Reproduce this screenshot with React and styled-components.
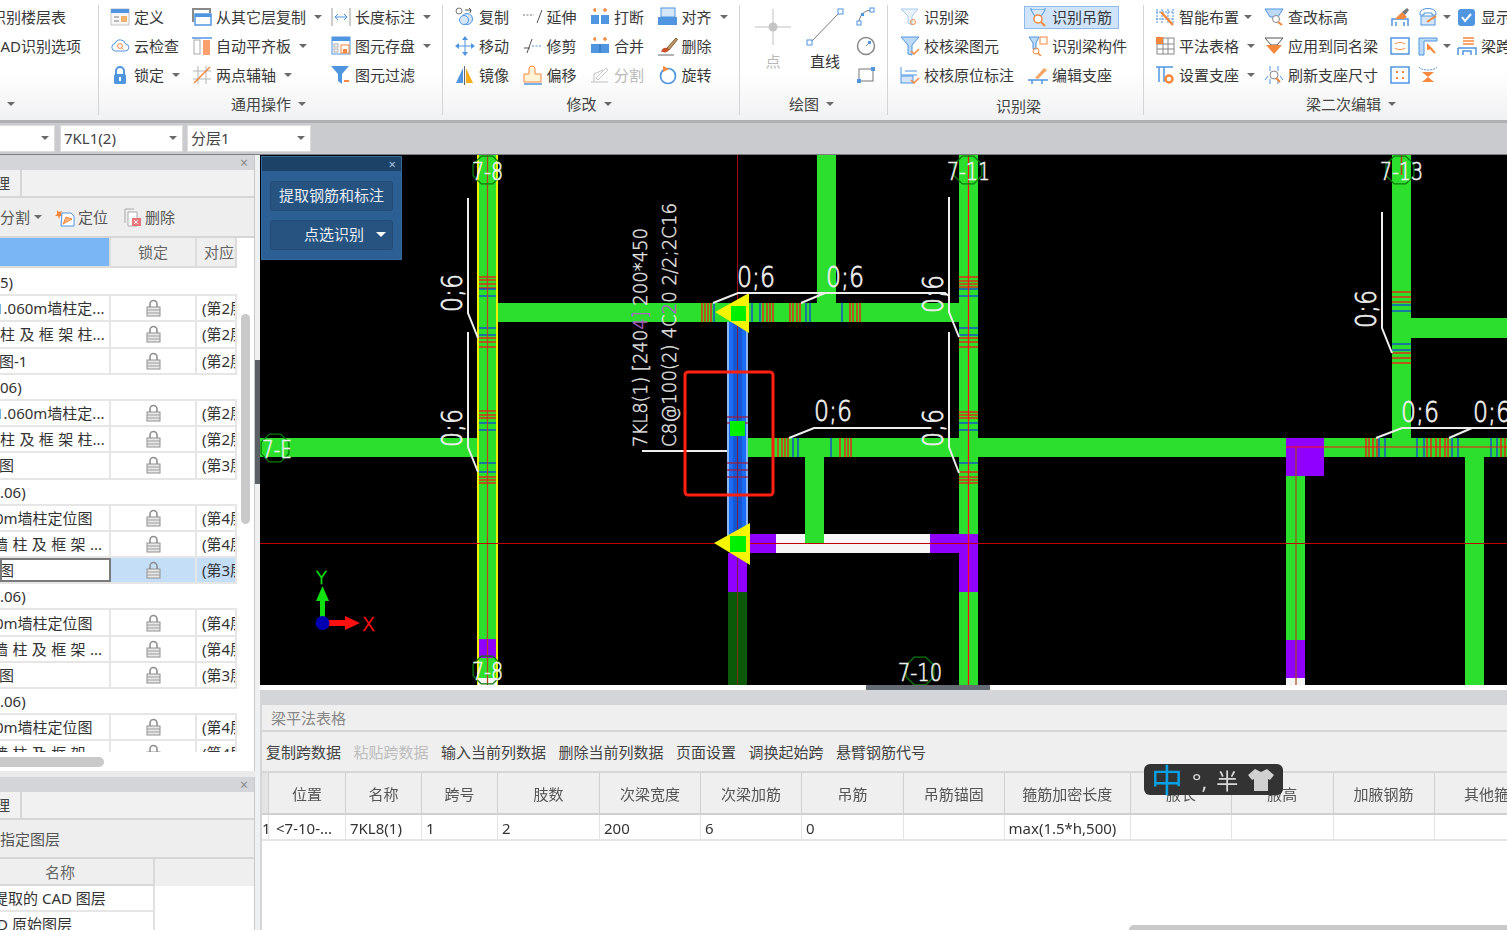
import React from "react";
import styled, { createGlobalStyle } from "styled-components";

const Global = createGlobalStyle`
  html, body { margin: 0; padding: 0; background: #fff; overflow: hidden; }
  body { font-family: "Noto Sans", "Noto Sans CJK SC", sans-serif; font-size: 15px; color: #333; }
`;

const B = "#4f95e0", O = "#f5883c", L = "#d5e6f8";

const Page = styled.div`
  width: 1507px;
  height: 930px;
  overflow: hidden;
  display: flex;
  flex-direction: column;
  filter: blur(0.35px);
  span, div { line-height: 20px; }
`;

/* ---------- ribbon ---------- */
const Ribbon = styled.div`
  height: 120px;
  display: flex;
  background: linear-gradient(#ffffff 60%, #f0f1f2);
  flex: none;
`;
const Group = styled.div`
  width: ${p => p.$w}px;
  margin-left: ${p => p.$ml || 0}px;
  flex: none;
  display: flex;
  flex-direction: column;
`;
const Sep = styled.div`
  width: 1px;
  flex: none;
  margin: 5px 0 5px;
  background: #d2d4d6;
`;
const Cols = styled.div`
  display: flex;
  height: 90px;
  padding: 2px 0 0 ${p => p.$pad || 0}px;
  box-sizing: border-box;
`;
const Col = styled.div`
  width: ${p => p.$w}px;
  flex: none;
`;
const Item = styled.div`
  display: flex;
  align-items: center;
  height: ${p => (p.$active ? 23 : 29)}px;
  gap: 4px;
  white-space: nowrap;
  color: ${p => (p.$off ? "#b8b8b8" : "#383838")};
  ${p => p.$active && `
    margin: 4px 0 2px -4px;
    width: 95px;
    box-sizing: border-box;
    padding: 0 0 2px 3px;
    background: #cfe4fb;
    border: 1px solid #8fbbea;
  `}
`;
const BigItem = styled.div`
  display: flex;
  flex-direction: column;
  align-items: center;
  width: 38px;
  padding-top: 6px;
  color: ${p => (p.$off ? "#b8b8b8" : "#333")};
  span { margin-top: 5px; white-space: nowrap; }
`;
const Caret = styled.i`
  display: inline-block;
  width: 0;
  height: 0;
  margin-left: ${p => p.$ml ?? 4}px;
  border-left: 4px solid transparent;
  border-right: 4px solid transparent;
  border-top: 4px solid #6a6a6a;
`;
const GroupLabel = styled.div`
  height: 28px;
  display: flex;
  align-items: center;
  justify-content: center;
  gap: 3px;
  color: #444;
  padding-top: ${p => (p.$low ? 4 : 0)}px;
  padding-left: ${p => p.$pl || 0}px;
  padding-right: ${p => p.$pr ?? 4}px;
  box-sizing: border-box;
`;

const Svg = ({ size = 20, h, children }) => (
  <svg width={size} height={h || size} viewBox={`0 0 ${size} ${h || size}`} style={{ flex: "none" }} fill="none">{children}</svg>
);

const icons = {
  define: <><rect x="1" y="2" width="18" height="16" fill="#f6f6f6" stroke="#c4c4c4" /><rect x="1" y="2" width="18" height="4" fill={B} /><rect x="4" y="9" width="5" height="2" fill="#bbb" /><rect x="4" y="13" width="5" height="2" fill="#bbb" /><rect x="11" y="9" width="6" height="6" fill="#f3b26b" /></>,
  cloud: <><path d="M5 15h10a3.5 3.5 0 0 0 .5-7 5.5 5.5 0 0 0-10.5-.5A3.8 3.8 0 0 0 5 15z" stroke={B} fill="#fff" /><circle cx="10" cy="10" r="2.4" stroke={O} /><path d="M12 12l1.5 1.5" stroke={O} /></>,
  lock: <><path d="M6 9V6a4 4 0 0 1 8 0v3" stroke={B} strokeWidth="2" /><rect x="4" y="9" width="12" height="10" rx="1.5" fill={B} /><rect x="9" y="12" width="2" height="4" fill="#fff" /></>,
  copyLayer: <><path d="M1 15V2h17v4" stroke="#8a8a8a" strokeWidth="2" /><rect x="3" y="7" width="16" height="11" fill="#fff" stroke={B} strokeWidth="1.5" /><rect x="3" y="7" width="16" height="3" fill={B} /></>,
  alignBoard: <><path d="M0 2h20" stroke={B} strokeWidth="1.5" /><rect x="2" y="4" width="6" height="14" fill="#fff" stroke="#aaa" /><rect x="11" y="4" width="7" height="15" fill="#f9a06e" /></>,
  twoPoint: <><path d="M6 1v18M14 1v18M1 6h18M1 14h18" stroke="#b5b5b5" /><path d="M2 18L18 2" stroke={O} strokeWidth="1.5" /></>,
  dim: <><path d="M1 1v18M19 1v18" stroke="#9a9a9a" /><path d="M4 10h12M4 10l3-3M4 10l3 3M16 10l-3-3M16 10l-3 3" stroke={B} /></>,
  save: <><rect x="1" y="1" width="18" height="17" fill="#fff" stroke={B} /><rect x="1" y="1" width="18" height="4" fill={B} /><rect x="3" y="8" width="4" height="3" stroke="#aaa" /><rect x="3" y="13" width="4" height="3" stroke="#aaa" /><rect x="10" y="9" width="8" height="8" fill="#fff" stroke={O} /><rect x="12" y="13" width="4" height="4" fill={O} /></>,
  filter: <><path d="M0 1h18l-7 8v10l-4-3V9z" fill={B} /><rect x="13" y="15" width="5" height="2" fill={O} /></>,
  copy: <><circle cx="4" cy="4" r="3" stroke="#777" /><circle cx="12" cy="12" r="5.5" fill={L} stroke={B} /><circle cx="9" cy="13" r="4.5" fill={L} stroke={B} /><path d="M10 3h6l-2-2M16 3l-1 3" stroke="#555" /></>,
  move: <><path d="M10 3v14M3 10h14" stroke={B} /><path d="M10 0l3 4H7zM10 20l3-4H7zM0 10l4-3v6zM20 10l-4-3v6z" fill={B} /></>,
  mirror: <><path d="M8 3L1 18h7z" fill={B} /><path d="M11 3l7 15h-7z" fill="#f6ad1e" /><path d="M9.500 1v19" stroke="#666" /></>,
  extend: <><path d="M0 8h11" stroke="#777" strokeDasharray="2 1.500" /><path d="M14 16L19 3" stroke="#555" /></>,
  trim: <><path d="M1 12h6" stroke="#555" /><path d="M4 17L9 3" stroke="#555" /><path d="M9 10h10" stroke={B} strokeDasharray="2 1.500" /></>,
  offset: <><path d="M6 9V4a3 3 0 0 1 6 0v5h6v8H1V9z" fill="#fff3d8" stroke={O} /><path d="M1 19h18" stroke={B} strokeWidth="1.5" /></>,
  cut: <><path d="M3 3h3M5 1v4M13 3h4M15 1v4" stroke={O} strokeWidth="1.500" /><rect x="1" y="8" width="8" height="9" fill={B} /><rect x="11" y="8" width="8" height="9" fill={B} /></>,
  merge: <><path d="M3 3h3M5 1v4M13 3h4M15 1v4" stroke={O} strokeWidth="1.500" /><rect x="1" y="8" width="18" height="9" fill={B} /><path d="M10 8v9" stroke="#2d6cb3" /></>,
  split: <><path d="M1 17h17M4 17V9l9-4" stroke="#c0c0c0" /><path d="M6 13L16 3l2 2L8 15z" stroke="#c8c8c8" /></>,
  align: <><rect x="3" y="1" width="14" height="9" fill={L} stroke={B} /><rect x="0" y="10" width="19" height="8" fill={B} /></>,
  erase: <><path d="M9 12L18 2l1.500 1.500L11 14z" fill="#c29a6a" stroke="#7a5a30" /><path d="M3 16c1-4 4-5 6-4l2 2c-1 2-4 3-6 2z" fill="#c8502a" /><path d="M0 19h16" stroke="#666" /></>,
  rotate: <><circle cx="10" cy="11" r="7.500" stroke={B} strokeWidth="1.700" /><path d="M5 1l6 3-6 3z" fill={O} /></>,
  arcPts: <><path d="M3 16C3 9 8 3 16 3" stroke="#777" /><rect x="1" y="14" width="4" height="4" fill="#fff" stroke={B} /><rect x="14" y="1" width="4" height="4" fill="#fff" stroke={B} /><rect x="5" y="6" width="3" height="3" fill={B} /></>,
  circle: <><circle cx="10" cy="10" r="8.500" stroke="#888" strokeWidth="1.500" /><path d="M10 10l3-3" stroke="#888" /><rect x="12" y="5" width="3" height="3" fill={B} /></>,
  rectPts: <><rect x="3" y="4" width="14" height="12" stroke="#777" /><rect x="1" y="14" width="4" height="4" fill={B} /><rect x="15" y="2" width="4" height="4" fill={B} /></>,
  funnelScan: <><path d="M1 2h17l-6 7v9l-4-2V9z" fill="#eaf3fb" stroke="#a7cbee" /><circle cx="13" cy="15" r="2.500" stroke={O} /></>,
  funnelCheck: <><path d="M1 1h18l-7 8v10l-4-1V9z" fill="#bcd9f5" stroke={B} /><path d="M11 15l3 3 5-5" stroke={O} strokeWidth="1.500" /></>,
  edgeCheck: <><path d="M1 2v8h16M5 6h12" stroke={B} /><rect x="1" y="11" width="12" height="7" fill={L} stroke={B} /><path d="M11 15l3 3 5-5" stroke={O} strokeWidth="1.500" /></>,
  hanger: <><path d="M3 1v2h14V1" stroke={B} /><path d="M3 3l5 8h4l5-8" fill={L} stroke={B} /><circle cx="10" cy="12" r="4" fill="#fff" stroke={O} strokeWidth="1.500" /><path d="M13 15l4 4" stroke={O} strokeWidth="2" /></>,
  beamParts: <><path d="M1 1h10l-3 6v6H5V7z" fill="#bcd9f5" stroke={B} /><rect x="12" y="1" width="7" height="7" fill="#fff" stroke={O} /><circle cx="8" cy="15" r="3" stroke={O} /><path d="M10 17l3 3" stroke={O} strokeWidth="1.500" /></>,
  support: <><path d="M7 13L16 3l3 2-9 9z" fill="#f6a664" /><path d="M0 15h20M4 15v4M14 15v4" stroke={B} strokeWidth="1.500" /></>,
  smart: <><path d="M2 2v14M7 2v14M13 2v14M18 2v14M1 5h18M1 12h18" stroke={B} strokeDasharray="2 1" /><path d="M6 5l12 13" stroke={O} strokeWidth="2.500" /></>,
  grid: <><rect x="2" y="2" width="17" height="16" fill="#fff" stroke="#888" /><path d="M2 8h17M2 13h17M8 2v16M13 2v16" stroke="#888" /><rect x="1" y="1" width="7" height="7" fill={O} /></>,
  supportGear: <><path d="M1 2h17M4 2v15M9 2v15" stroke={B} strokeWidth="1.500" /><circle cx="14" cy="14" r="3.500" stroke={O} strokeWidth="2.500" /></>,
  level: <><path d="M1 2h18l-5 8H6z" fill="#bcd9f5" stroke={B} /><circle cx="12" cy="12" r="3.500" fill="#fff" stroke="#888" /><path d="M14 15l4 3" stroke={O} strokeWidth="2" /></>,
  applyAll: <><path d="M1 2h18l-6 7h-6z" stroke="#555" /><path d="M2 9h16l-8 9z" fill={O} /></>,
  refresh: <><path d="M6 1v5M14 1v5M6 19v-5M14 19v-5" stroke={B} /><circle cx="10" cy="10" r="4" fill="#fff" stroke="#888" /><path d="M1 15l3-4M19 15l-3-4" stroke={B} /><path d="M12 13l4 4" stroke={O} strokeWidth="2" /></>,
  brush: <><path d="M2 19v-7h16v7M6 19v-4M14 19v-4" stroke={B} strokeWidth="1.500" /><path d="M5 12l7-7 5 5-3 2z" fill={O} /><path d="M12 5l5-4 2 2-4 5z" fill="#777" /></>,
  phone: <><path d="M2 6c0-6 16-6 16 0v2h-4V6H6v2H2z" stroke={B} /><rect x="3" y="9" width="14" height="9" fill={L} stroke={B} /><path d="M9 15l9-6" stroke={O} strokeWidth="2" /></>,
  boxH: <><rect x="1" y="2" width="18" height="16" stroke={B} fill="#fff" strokeWidth="1.500" /><path d="M5 8c3-2 7-2 10 0M5 12c3 2 7 2 10 0" stroke={O} /></>,
  cornerFlag: <><path d="M1 2h18v3H6v14H1z" fill="#bcd9f5" stroke={B} /><path d="M9 7l6 6-6 1z" fill={O} /><path d="M13 13l4 4" stroke={O} strokeWidth="2" /></>,
  dots: <><rect x="1" y="2" width="18" height="16" stroke={B} fill="#fff" strokeWidth="1.500" /><path d="M6 6h2v2H6zM12 6h2v2h-2zM6 12h2v2H6zM12 12h2v2h-2z" fill={O} /></>,
  hourglass: <><path d="M1 2c2 4 16 4 18 0" stroke={B} strokeDasharray="2 1" /><path d="M4 7h12l-6 5 6 5H4l6-5z" fill={O} /></>,
  check: <><rect x="1" y="2" width="17" height="17" rx="3" fill={B} /><path d="M5 10l3 4 6-7" stroke="#fff" strokeWidth="2" /></>,
  span: <><path d="M1 12h18v7M1 19v-7M6 19v-4h8v4" stroke={B} strokeWidth="1.500" /><path d="M6 2h11M6 5h11M6 8h11" stroke={O} strokeWidth="1.500" /></>,
};
const Ico = ({ n }) => <Svg>{icons[n]}</Svg>;

const Cell = ({ n, t, caret, off, active, ml }) => (
  <Item $off={off} $active={active}>
    {n && <Ico n={n} />}
    {t && <span>{t}</span>}
    {caret && <Caret $ml={ml} />}
  </Item>
);

const RibbonBar = () => (
  <Ribbon>
    <Group $w={178} $ml={-80}>
      <Cols $pad={71}>
        <Col $w={100}><Item>识别楼层表</Item><Item>CAD识别选项</Item></Col>
      </Cols>
      <GroupLabel $pr={0}><Caret /></GroupLabel>
    </Group>
    <Sep />
    <Group $w={343}>
      <Cols $pad={11}>
        <Col $w={82}><Cell n="define" t="定义" /><Cell n="cloud" t="云检查" /><Cell n="lock" t="锁定" caret /></Col>
        <Col $w={139}><Cell n="copyLayer" t="从其它层复制" caret /><Cell n="alignBoard" t="自动平齐板" caret /><Cell n="twoPoint" t="两点辅轴" caret /></Col>
        <Col $w={100}><Cell n="dim" t="长度标注" caret /><Cell n="save" t="图元存盘" caret /><Cell n="filter" t="图元过滤" /></Col>
      </Cols>
      <GroupLabel>通用操作<Caret /></GroupLabel>
    </Group>
    <Sep />
    <Group $w={296}>
      <Cols $pad={12}>
        <Col $w={67.5}><Cell n="copy" t="复制" /><Cell n="move" t="移动" /><Cell n="mirror" t="镜像" /></Col>
        <Col $w={67.5}><Cell n="extend" t="延伸" /><Cell n="trim" t="修剪" /><Cell n="offset" t="偏移" /></Col>
        <Col $w={67.5}><Cell n="cut" t="打断" /><Cell n="merge" t="合并" /><Cell n="split" t="分割" off /></Col>
        <Col $w={70}><Cell n="align" t="对齐" caret /><Cell n="erase" t="删除" /><Cell n="rotate" t="旋转" /></Col>
      </Cols>
      <GroupLabel>修改<Caret /></GroupLabel>
    </Group>
    <Sep />
    <Group $w={147}>
      <Cols $pad={14}>
        <Col $w={52}>
          <BigItem $off>
            <svg width="38" height="38" viewBox="0 0 38 38"><path d="M19 1v36M1 19h36" stroke="#d6d6d6" strokeWidth="1.500" /><circle cx="19" cy="19" r="4.500" fill="#c4c4c4" /></svg>
            <span>点</span>
          </BigItem>
        </Col>
        <Col $w={50}>
          <BigItem>
            <svg width="38" height="38" viewBox="0 0 38 38"><path d="M4 35L35 3" stroke="#777" /><rect x="1" y="32" width="5" height="5" fill="#fff" stroke={B} /><rect x="32" y="1" width="5" height="5" fill="#fff" stroke={B} /></svg>
            <span>直线</span>
          </BigItem>
        </Col>
        <Col $w={24}><Cell n="arcPts" /><Cell n="circle" /><Cell n="rectPts" /></Col>
      </Cols>
      <GroupLabel>绘图<Caret /></GroupLabel>
    </Group>
    <Sep />
    <Group $w={255}>
      <Cols $pad={12}>
        <Col $w={128}><Cell n="funnelScan" t="识别梁" /><Cell n="funnelCheck" t="校核梁图元" /><Cell n="edgeCheck" t="校核原位标注" /></Col>
        <Col $w={110}><Cell n="hanger" t="识别吊筋" active /><Cell n="beamParts" t="识别梁构件" /><Cell n="support" t="编辑支座" /></Col>
      </Cols>
      <GroupLabel $low $pl={6} $pr={0}>识别梁</GroupLabel>
    </Group>
    <Sep />
    <Group $w={414}>
      <Cols $pad={11}>
        <Col $w={109}><Cell n="smart" t="智能布置" caret ml={1} /><Cell n="grid" t="平法表格" caret /><Cell n="supportGear" t="设置支座" caret /></Col>
        <Col $w={126}><Cell n="level" t="查改标高" /><Cell n="applyAll" t="应用到同名梁" /><Cell n="refresh" t="刷新支座尺寸" /></Col>
        <Col $w={28}><Cell n="brush" /><Cell n="boxH" /><Cell n="dots" /></Col>
        <Col $w={39}><Cell n="phone" caret ml={1} /><Cell n="cornerFlag" caret ml={1} /><Cell n="hourglass" /></Col>
        <Col $w={60}><Cell n="check" t="显示梁" /><Cell n="span" t="梁跨" /></Col>
      </Cols>
      <GroupLabel $pr={0}>梁二次编辑<Caret /></GroupLabel>
    </Group>
  </Ribbon>
);

/* ---------- combo strip ---------- */
const ComboBar = styled.div`
  height: 35px;
  flex: none;
  box-sizing: border-box;
  border-top: 3px solid #aeb0b2;
  border-bottom: 1px solid #7d7f82;
  background: #c9cbce;
  display: flex;
  align-items: center;
  gap: 4px;
`;
const Combo = styled.div`
  width: ${p => p.$w}px;
  margin-left: ${p => p.$ml || 0}px;
  height: 27px;
  box-sizing: border-box;
  background: #fff;
  border: 1px solid #dcdcdc;
  padding: 0 5px 2px 3px;
  display: flex;
  align-items: center;
  justify-content: space-between;
  color: #444;
`;

/* ---------- left side ---------- */
const Main = styled.div`
  flex: 1;
  display: flex;
  min-height: 0;
  position: relative;
`;
const LeftCol = styled.div`
  width: 255px;
  flex: none;
  display: flex;
  flex-direction: column;
  background: #e9eaec;
`;
const Splitter = styled.div`
  width: 5px;
  flex: none;
  background: #eef0f2;
`;
const SplitHandle = styled.div`
  margin-top: 205px;
  height: 124px;
  background: #5c6168;
`;
const Panel = styled.div`
  height: ${p => p.$h}px;
  flex: none;
  margin-bottom: ${p => p.$mb || 0}px;
  background: #fff;
  border-right: 1px solid #c6c8ca;
  display: flex;
  flex-direction: column;
  overflow: hidden;
`;
const PanelTitle = styled.div`
  height: 15px;
  flex: none;
  background: #d3d5d9;
  display: flex;
  justify-content: flex-end;
  align-items: center;
  padding-right: 6px;
  color: #8a8a8a;
  font-size: 14px;
`;
const TabRow = styled.div`
  height: 28px;
  flex: none;
  box-sizing: border-box;
  background: #f1f1f1;
  border-bottom: 2px solid #d6d6d6;
  display: flex;
`;
const Tab = styled.div`
  width: 82px;
  margin-left: -60px;
  box-sizing: border-box;
  border-right: 2px solid #d6d6d6;
  display: flex;
  align-items: center;
  justify-content: center;
  color: #444;
`;
const ToolRow = styled.div`
  height: ${p => p.$h}px;
  flex: none;
  box-sizing: border-box;
  background: #eeeeee;
  border-bottom: 2px solid #d6d6d6;
  display: flex;
  align-items: center;
  color: #555;
  gap: 6px;
`;
const ToolItem = styled.div`
  display: flex;
  align-items: center;
  gap: 3px;
  margin-left: ${p => p.$ml || 0}px;
  white-space: nowrap;
`;
const ListArea = styled.div`
  flex: 1;
  display: flex;
  min-height: 0;
`;
const ListClip = styled.div`
  width: 237px;
  height: 514px;
  flex: none;
  overflow: hidden;
`;
const VTrack = styled.div`
  flex: 1;
`;
const VThumb = styled.div`
  width: 9px;
  height: 210px;
  margin: 76px 0 0 4px;
  background: #c9c9c9;
  border-radius: 5px;
`;
const HeadRow = styled.div`
  display: grid;
  grid-template-columns: 111px 86px 40px;
  height: 30px;
  margin-bottom: 2px;
`;
const HeadCell = styled.div`
  background: ${p => (p.$blue ? "#7ab6f6" : "#efefef")};
  border-right: 2px solid #dcdcdc;
  border-bottom: 2px solid #dcdcdc;
  display: flex;
  align-items: center;
  justify-content: ${p => (p.$left ? "flex-start" : "center")};
  padding-left: ${p => (p.$left ? 7 : 0)}px;
  color: #666;
  white-space: nowrap;
  overflow: hidden;
`;
const Row = styled.div`
  display: grid;
  grid-template-columns: 111px 86px 40px;
  height: 26.2px;
  box-sizing: border-box;
  border-bottom: 2px solid #e6e6e6;
  align-items: center;
  white-space: nowrap;
  word-spacing: 0.5px;
`;
const RowCell = styled.div`
  height: 100%;
  display: flex;
  align-items: center;
  justify-content: ${p => (p.$center ? "center" : "flex-start")};
  border-right: 2px solid #e6e6e6;
  overflow: hidden;
  background: ${p => (p.$sel ? "#c4def8" : "transparent")};
  padding-left: ${p => p.$pl || 0}px;
  box-sizing: border-box;
  ${p => p.$focus && "outline: 2px solid #7a7a7a; outline-offset: -2px;"}
`;
const Shift = styled.span`
  margin-left: ${p => p.$s || 0}px;
  flex: none;
  color: #333;
`;
const GroupRow = styled.div`
  height: 26.2px;
  box-sizing: border-box;
  border-bottom: 2px solid #e6e6e6;
  display: flex;
  align-items: center;
`;
const HScroll = styled.div`
  height: 19px;
  flex: none;
`;
const HThumb = styled.div`
  width: 104px;
  height: 10px;
  margin-top: 5px;
  background: #c9c9c9;
  border-radius: 0 5px 5px 0;
`;

const LockIcon = () => (
  <svg width="15" height="18" viewBox="0 0 15 18">
    <path d="M4 8V5a3.500 3.500 0 0 1 7 0v3" stroke="#8f8f8f" strokeWidth="1.600" fill="none" />
    <rect x="1" y="8" width="13" height="9" fill="#e8e8e8" stroke="#8f8f8f" />
    <path d="M1 11h13M1 14h13" stroke="#9c9c9c" />
  </svg>
);

const rows = [
  { g: "5)" },
  { t: "1.060m墙柱定...", s: -5, f: 2 },
  { t: "柱 及 框 架 柱...", s: 0, f: 2 },
  { t: "图-1", s: -1, f: 2 },
  { g: "06)" },
  { t: "1.060m墙柱定...", s: -5, f: 2 },
  { t: "柱 及 框 架 柱...", s: 0, f: 2 },
  { t: "图", s: -1, f: 3 },
  { g: ".06)" },
  { t: "0m墙柱定位图", s: -5, f: 4 },
  { t: "墙 柱 及 框 架 ...", s: -7, f: 4 },
  { t: "图", s: -1, f: 3, sel: true },
  { g: ".06)" },
  { t: "0m墙柱定位图", s: -5, f: 4 },
  { t: "墙 柱 及 框 架 ...", s: -7, f: 4 },
  { t: "图", s: -1, f: 3 },
  { g: ".06)" },
  { t: "0m墙柱定位图", s: -5, f: 4 },
  { t: "墙 柱 及 框 架 ...", s: -7, f: 4 },
];

const LayerList = () => (
  <ListClip>
    <HeadRow>
      <HeadCell $blue />
      <HeadCell>锁定</HeadCell>
      <HeadCell $left>对应组</HeadCell>
    </HeadRow>
    {rows.map((r, i) =>
      r.g ? (
        <GroupRow key={i}><Shift>{r.g}</Shift></GroupRow>
      ) : (
        <Row key={i}>
          <RowCell $focus={r.sel}><Shift $s={r.s}>{r.t}</Shift></RowCell>
          <RowCell $center $sel={r.sel}><LockIcon /></RowCell>
          <RowCell $pl={5} $sel={r.sel}><Shift>(第{r.f}层</Shift></RowCell>
        </Row>
      )
    )}
  </ListClip>
);

const LowerHead = styled.div`
  display: flex;
  height: 27px;
  flex: none;
  background: #efefef;
`;
const LowerName = styled.div`
  width: 155px;
  box-sizing: border-box;
  border-right: 2px solid #d8d8d8;
  border-bottom: 2px solid #d8d8d8;
  display: flex;
  align-items: center;
  justify-content: center;
  padding-right: 33px;
  color: #666;
`;
const LowerRow = styled.div`
  width: 155px;
  height: 26px;
  flex: none;
  box-sizing: border-box;
  border-right: 2px solid #e0e0e0;
  border-bottom: 2px solid #e6e6e6;
  display: flex;
  align-items: center;
  overflow: hidden;
  white-space: nowrap;
`;

const LeftSide = () => (
  <LeftCol>
    <Panel $h={616} $mb={6}>
      <PanelTitle>×</PanelTitle>
      <TabRow><Tab>图纸管理</Tab></TabRow>
      <ToolRow $h={40}>
        <ToolItem>分割<Caret $ml={1} /></ToolItem>
        <ToolItem $ml={7}>
          <Svg><path d="M2 3l2 2 3-1-1 3 2 2-3 0-1 3-1-3-3 0 2-2z" fill={O} /><path d="M7 6h9l3 3v10H6z" fill="#fff" stroke={B} /><path d="M8 17l9-5-6-2z" fill="#f8b27a" stroke={O} /></Svg>
          定位
        </ToolItem>
        <ToolItem $ml={8}>
          <Svg><path d="M3 16V2h9" stroke="#aaa" /><path d="M6 19V5h9v14z" fill="#fff" stroke="#aaa" /><rect x="10" y="11" width="9" height="8" fill="#e8747a" /><path d="M12 13l4 4M16 13l-4 4" stroke="#fff" /></Svg>
          删除
        </ToolItem>
      </ToolRow>
      <ListArea>
        <LayerList />
        <VTrack><VThumb /></VTrack>
      </ListArea>
      <HScroll><HThumb /></HScroll>
    </Panel>
    <Panel $h={153}>
      <PanelTitle>×</PanelTitle>
      <TabRow><Tab>图纸管理</Tab></TabRow>
      <ToolRow $h={39}>指定图层</ToolRow>
      <LowerHead><LowerName>名称</LowerName></LowerHead>
      <LowerRow><Shift $s={-7}>提取的 CAD 图层</Shift></LowerRow>
      <LowerRow><Shift $s={-22}>CAD 原始图层</Shift></LowerRow>
    </Panel>
  </LeftCol>
);

/* ---------- CAD canvas ---------- */
const RightCol = styled.div`
  flex: 1;
  min-width: 0;
  display: flex;
  flex-direction: column;
  position: relative;
`;
const Canvas = styled.div`
  height: 530px;
  flex: none;
  background: #000;
  position: relative;
  overflow: hidden;
  svg { display: block; }
`;
const FloatPanel = styled.div`
  position: absolute;
  left: 1px;
  top: 1px;
  width: 141px;
  height: 104px;
  box-sizing: border-box;
  background: #2c5f93;
  border: 1px solid #34699f;
  color: #e6edf5;
`;
const FloatTitle = styled.div`
  height: 14px;
  background: #1d4268;
  display: flex;
  justify-content: flex-end;
  align-items: center;
  padding-right: 5px;
  font-size: 13px;
  color: #a9c4e0;
`;
const FloatBtn = styled.div`
  height: 30px;
  box-sizing: border-box;
  margin: ${p => p.$mt}px 8px 0;
  background: #275380;
  border: 1px solid #234b74;
  border-radius: 3px;
  display: flex;
  align-items: center;
  justify-content: center;
  gap: 12px;
  padding: 0 0 3px ${p => p.$pl || 0}px;
  i { border-top-color: #fff; border-left-width: 5px; border-right-width: 5px; border-top-width: 5px; margin: 2px 0 0; }
`;

const GREEN = "#2ddf2d", PURPLE = "#8f00ff", RED = "#ff1010", TICK_B = "#1040e0", WHITE = "#eeeeee";

// [x, y, w, h, fill]
const beams = [
  [477, 155, 21, 530, "#f0f000"], [479, 155, 17, 530, GREEN],
  [498, 303, 461, 19, GREEN],
  [817, 155, 19, 148, GREEN],
  [260, 438, 217, 19, GREEN],
  [748, 438, 538, 19, GREEN],
  [1324, 438, 183, 19, GREEN],
  [1286, 438, 38, 38, PURPLE],
  [1286, 476, 19, 209, GREEN],
  [1286, 640, 19, 38, PURPLE],
  [1286, 678, 19, 7, "#f4f4f4"],
  [1465, 457, 19, 228, GREEN],
  [1392, 155, 19, 283, GREEN],
  [1411, 318, 96, 20, GREEN],
  [805, 457, 19, 77, GREEN],
  [959, 155, 19, 379, GREEN],
  [959, 592, 19, 93, GREEN],
  [959, 534, 19, 58, PURPLE],
  [750, 534, 26, 19, PURPLE],
  [776, 534, 154, 19, "#f6f6f6"],
  [805, 534, 19, 9, GREEN],
  [930, 534, 48, 19, PURPLE],
  [479, 639, 17, 19, PURPLE],
  [478, 678, 19, 7, "#f4f4f4"],
  [727, 322, 21, 218, "#8ab6f4"],
  [729, 322, 17, 218, "#1a6cf5"],
  [733, 322, 9, 218, "#1558d6"],
  [728, 553, 19, 39, PURPLE],
  [728, 592, 19, 93, "#0a5a0a"],
];

const hTicks = [
  [303, 322, RED, [702, 705, 708, 711, 763, 767, 770, 773, 790, 793, 797, 800, 850, 853, 857, 860]],
  [303, 322, TICK_B, [714, 752, 760, 806, 810, 842]],
  [438, 457, RED, [778, 782, 785, 788, 840, 845, 848, 851, 1366, 1369, 1373, 1377, 1427, 1431, 1436, 1440, 1445, 1448, 1501, 1505]],
  [438, 457, TICK_B, [793, 798, 831, 1379, 1385, 1417, 1424, 1452, 1458, 1491, 1497]],
];
const vTicks = [
  [479, 496, RED, [277, 280, 284, 288, 338, 342, 347, 411, 415, 418, 477, 480, 483]],
  [479, 496, TICK_B, [289, 296, 328, 335, 423, 430, 463, 472]],
  [959, 978, RED, [277, 281, 284, 287, 338, 342, 347, 412, 415, 418, 472, 477, 480, 483]],
  [959, 978, TICK_B, [289, 296, 328, 335, 423, 430, 463]],
  [1392, 1411, RED, [292, 297, 302, 353, 358, 363]],
  [1392, 1411, TICK_B, [305, 311, 344, 350]],
  [727, 748, "#a02040", [417, 423, 463, 470, 477]],
];
const leaders = [
  "468,198 468,313 478,338",
  "468,332 468,447 478,472",
  "949,197 949,312 959,337",
  "949,332 949,447 959,473",
  "1382,212 1382,328 1392,353",
  "713,303 738,293 945,293 949,296",
  "801,303 825,293",
  "789,438 814,428 930,428",
  "1376,438 1402,428 1507,428",
  "1449,438 1472,428",
  "642,451 727,451",
];
const flatLabels = [[737, 287], [826, 287], [814, 421], [1401, 422], [1473, 422]];
const upLabels = [[462, 312], [462, 447], [943, 313], [943, 447], [1376, 328]];
const axes = [
  ["7-8", 487, 170, 472, 31],
  ["7-11", 968, 170, 947, 43],
  ["7-13", 1400, 170, 1380, 43],
  ["7-E", 275, 448, 262, 30],
  ["7-10", 920, 671, 898, 44],
  ["7-8", 487, 670, 472, 31],
];

const octagon = (cx, cy, r) =>
  Array.from({ length: 8 }, (_, i) => {
    const a = Math.PI / 8 + (i * Math.PI) / 4;
    return `${(cx + r * Math.cos(a)).toFixed(1)},${(cy + r * Math.sin(a)).toFixed(1)}`;
  }).join(" ");

const Drawing = () => (
  <svg width="1247" height="530" viewBox="260 155 1247 530" fontFamily="'DejaVu Sans', sans-serif" fontWeight="200">
    {beams.map(([x, y, w, h, fill], i) => <rect key={i} x={x} y={y} width={w} height={h} fill={fill} />)}
    {hTicks.map(([y1, y2, c, xs]) => xs.map(x => <line key={c + y1 + x} x1={x} x2={x} y1={y1} y2={y2} stroke={c} strokeWidth="1.300" />))}
    {vTicks.map(([x1, x2, c, ys]) => ys.map(y => <line key={c + x1 + y} x1={x1} x2={x2} y1={y} y2={y} stroke={c} strokeWidth="1.300" />))}

    <path d="M487.500 155V685" stroke="#b8401c" strokeWidth="1.200" />
    <path d="M737.500 155V322" stroke="#a01010" />
    <path d="M737.500 322V592" stroke="#70204a" />
    <path d="M737.500 592V685" stroke="#7a3010" />
    <path d="M968.500 155V685" stroke={RED} strokeWidth="1.200" />
    <path d="M1296 447V685" stroke="#a04a18" strokeWidth="1.200" />
    <path d="M1401.500 155V175" stroke="#b8401c" strokeWidth="1.500" />
    <path d="M260 543.500H1507" stroke="#c00000" />
    <path d="M1286 447H1507" stroke={RED} strokeWidth="1.200" />

    <polygon points="715,312 749,293 749,333" fill="#f5f500" />
    <polygon points="714,543 750,523 750,565" fill="#f5f500" />
    <rect x="731" y="306" width="15" height="15" fill="#00f000" />
    <rect x="730" y="421" width="15" height="15" fill="#00f000" />
    <rect x="730" y="536" width="16" height="16" fill="#00f000" />

    {leaders.map(p => <polyline key={p} points={p} fill="none" stroke={WHITE} strokeWidth="2" />)}
    <g fill={WHITE} stroke={WHITE} strokeWidth="0.800">
      {flatLabels.map(([x, y]) => (
        <text key={x} x={x} y={y} fontSize="29" textLength="38" lengthAdjust="spacingAndGlyphs">0;6</text>
      ))}
      {upLabels.map(([x, y]) => (
        <text key={x + "," + y} transform={`translate(${x} ${y}) rotate(-90)`} fontSize="29" textLength="38" lengthAdjust="spacingAndGlyphs">0;6</text>
      ))}
    </g>
    <g fill="#e6e6e6" stroke="#e6e6e6" strokeWidth="0.400">
      <text transform="translate(647 447) rotate(-90)" fontSize="20" textLength="219" lengthAdjust="spacingAndGlyphs">
        7KL8(1) [240<tspan fill="#b060c8" stroke="#b060c8">4]</tspan> 200*450
      </text>
      <text transform="translate(676 447) rotate(-90)" fontSize="20" textLength="244" lengthAdjust="spacingAndGlyphs">
        C8@100(2) 4C<tspan fill="#b060c8" stroke="#b060c8">2</tspan>0 2/2;2C16
      </text>
    </g>

    {axes.map(([t, cx, cy, x, w]) => (
      <g key={t + cy}>
        <polygon points={octagon(cx, cy, 15)} fill="none" stroke="#0a7a0a" strokeWidth="1.300" />
        <text x={x} y={cy + 10} fill={WHITE} stroke={WHITE} strokeWidth="0.700" fontSize="25" textLength={w} lengthAdjust="spacingAndGlyphs">{t}</text>
      </g>
    ))}

    <rect x="685" y="372" width="88" height="123" rx="3" fill="none" stroke="#ff2010" strokeWidth="3" />

    <rect x="320" y="598" width="5" height="20" fill="#10e010" />
    <polygon points="322.500,586 316,601 329,601" fill="#10e010" />
    <rect x="328" y="620" width="18" height="6" fill={RED} />
    <polygon points="360,623 345,616 345,630" fill={RED} />
    <circle cx="322.500" cy="623" r="7" fill="#0000b0" />
    <text x="316" y="584" fill="#10e010" stroke="#10e010" strokeWidth="0.600" fontSize="18">Y</text>
    <text x="362" y="631" fill={RED} stroke={RED} strokeWidth="0.600" fontSize="19">X</text>
  </svg>
);

const CanvasEdge = styled.div`
  height: 5px;
  flex: none;
  background: #fff;
  display: flex;
  justify-content: flex-start;
`;
const EdgeHandle = styled.div`
  width: 124px;
  margin-left: 606px;
  background: #666c74;
`;

/* ---------- bottom table ---------- */
const Bottom = styled.div`
  flex: 1;
  min-height: 0;
  display: flex;
  flex-direction: column;
  position: relative;
  background: #fff;
  border-left: 2px solid #d4d6d8;
`;
const BottomSplit = styled.div`
  height: 15px;
  flex: none;
  background: #d3d5d9;
`;
const BottomTitle = styled.div`
  height: 27px;
  flex: none;
  box-sizing: border-box;
  background: #efefef;
  border-bottom: 2px solid #d6d6d6;
  display: flex;
  align-items: center;
  padding-left: 9px;
  color: #888;
`;
const BottomTools = styled.div`
  height: 41px;
  flex: none;
  box-sizing: border-box;
  background: #efefef;
  border-bottom: 2px solid #d6d6d6;
  display: flex;
  align-items: center;
  padding-left: 4px;
  gap: 12.500px;
  white-space: nowrap;
`;
const ToolText = styled.span`
  color: ${p => (p.$off ? "#bdbdbd" : "#444")};
`;
const colTemplate = "7px 77px 76px 76px 102px 101px 101px 102px 100.5px 126.5px 101px 101.6px 101px 120px";
const TableHead = styled.div`
  display: grid;
  grid-template-columns: ${colTemplate};
  height: 42px;
  flex: none;
  background: #efefef;
  box-sizing: border-box;
  border-bottom: 2px solid #d0d0d0;
  overflow: hidden;
`;
const Th = styled.div`
  display: flex;
  align-items: center;
  justify-content: center;
  padding-top: 1px;
  border-right: 1.500px solid #cfcfcf;
  color: #555;
  white-space: nowrap;
  ${p => p.$idx && "background: #e4e4e4;"}
`;
const TableRow = styled.div`
  display: grid;
  grid-template-columns: ${colTemplate};
  height: 26px;
  flex: none;
  box-sizing: border-box;
  border-bottom: 2px solid #e4e4e4;
  overflow: hidden;
`;
const Td = styled.div`
  display: flex;
  align-items: center;
  padding: 1px 0 0 ${p => p.$pl ?? 4}px;
  border-right: 1.500px solid #e4e4e4;
  color: #333;
  white-space: nowrap;
  overflow: hidden;
`;
const TableFill = styled.div`
  flex: 1;
  display: flex;
  justify-content: flex-end;
  align-items: flex-end;
`;
const BottomScroll = styled.div`
  width: 378px;
  height: 5px;
  background: #c9c9c9;
  border-radius: 5px 0 0 0;
`;
const Ime = styled.div`
  position: absolute;
  left: 882px;
  top: 74px;
  width: 139px;
  height: 31px;
  background: #333333;
  border-radius: 6px;
  display: flex;
  align-items: center;
  gap: 9px;
  padding-left: 7px;
  box-sizing: border-box;
  color: #d8d8d8;
  span { font-size: 22px; line-height: 28px; }
`;
const ImeZh = styled.span`
  && { font-size: 32px; color: #0aa0e6; line-height: 31px; }
`;

const heads = ["", "位置", "名称", "跨号", "肢数", "次梁宽度", "次梁加筋", "吊筋", "吊筋锚固", "箍筋加密长度", "腋长", "腋高", "加腋钢筋", "其他箍筋"];
const cells = ["1", "<7-10-...", "7KL8(1)", "1", "2", "200", "6", "0", "", "max(1.5*h,500)", "", "", "", ""];
const tools = [["复制跨数据"], ["粘贴跨数据", true], ["输入当前列数据"], ["删除当前列数据"], ["页面设置"], ["调换起始跨"], ["悬臂钢筋代号"]];
const cellPad = { 0: 0, 1: 7 };

const BottomPane = () => (
  <Bottom>
    <BottomSplit />
    <BottomTitle>梁平法表格</BottomTitle>
    <BottomTools>
      {tools.map(([t, off]) => <ToolText key={t} $off={off}>{t}</ToolText>)}
    </BottomTools>
    <TableHead>
      {heads.map((h, i) => <Th key={i} $idx={i === 0}>{h}</Th>)}
    </TableHead>
    <TableRow>
      {cells.map((c, i) => <Td key={i} $pl={cellPad[i]}>{c}</Td>)}
    </TableRow>
    <TableFill><BottomScroll /></TableFill>
    <Ime>
      <ImeZh>中</ImeZh>
      <span>°,</span>
      <span>半</span>
      <svg width="28" height="24" viewBox="0 0 28 24">
        <path d="M8 1l6 3 6-3 7 6-4 5-2-1v12H7V11l-2 1-4-5z" fill="#d0d0d0" />
      </svg>
    </Ime>
  </Bottom>
);

export default function App() {
  return (
    <>
      <Global />
      <Page>
        <RibbonBar />
        <ComboBar>
          <Combo $w={70} $ml={-15}><span />
            <Caret /></Combo>
          <Combo $w={123} $ml={1}>7KL1(2)<Caret /></Combo>
          <Combo $w={124}>分层1<Caret /></Combo>
        </ComboBar>
        <Main>
          <LeftSide />
          <Splitter><SplitHandle /></Splitter>
          <RightCol>
            <Canvas>
              <Drawing />
              <FloatPanel>
                <FloatTitle>×</FloatTitle>
                <FloatBtn $mt={10}>提取钢筋和标注</FloatBtn>
                <FloatBtn $mt={9} $pl={27}>点选识别<Caret /></FloatBtn>
              </FloatPanel>
            </Canvas>
            <CanvasEdge><EdgeHandle /></CanvasEdge>
            <BottomPane />
          </RightCol>
        </Main>
      </Page>
    </>
  );
}
